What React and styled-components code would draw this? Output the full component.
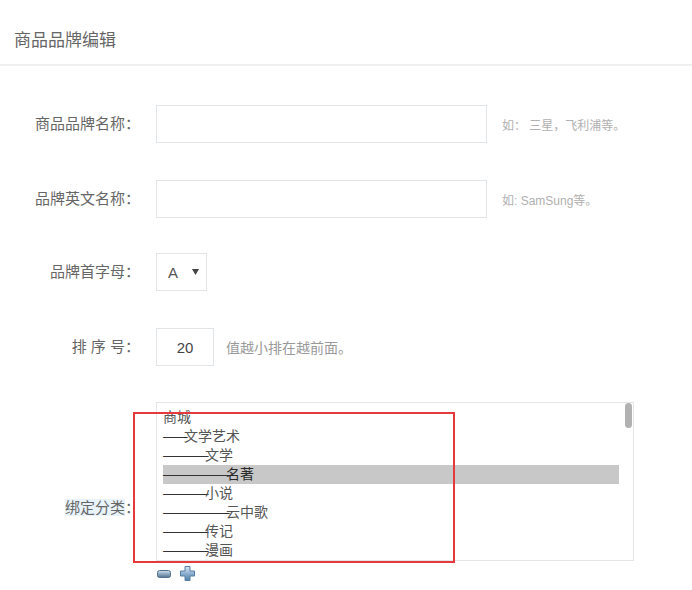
import React from 'react';
import styled, { createGlobalStyle } from 'styled-components';

const GlobalStyle = createGlobalStyle`
  html, body { margin: 0; padding: 0; background: #fff; }
  body { font-family: "Liberation Sans", "Noto Sans CJK SC", sans-serif; color: #666; }
  * { box-sizing: border-box; }
`;

const Page = styled.div`
  width: 692px;
  height: 590px;
  overflow: hidden;
`;

const Header = styled.header`
  height: 66px;
  padding: 12px 0 0 14px;
  display: flex;
  align-items: center;
  border-bottom: 2px solid #efefef;
  font-size: 17px;
  color: #666;
`;

const Form = styled.div`
  display: flex;
  flex-direction: column;
  padding-top: 39px;
`;

const Row = styled.div`
  position: relative;
  display: grid;
  grid-template-columns: 140px auto;
  column-gap: 16px;
  align-items: ${(p) => (p.$top ? 'start' : 'center')};
  margin-top: ${(p) => p.$mt || 0}px;
`;

const Label = styled.div`
  text-align: right;
  font-size: 15px;
  line-height: 20px;
  color: #666;
  white-space: pre;
  padding-top: ${(p) => p.$pt || 0}px;
`;

const Marked = styled.span`
  background: #e9f3fb;
`;

const Control = styled.div`
  display: flex;
  align-items: center;
`;

const TextInput = styled.input`
  width: ${(p) => p.$w}px;
  height: 38px;
  border: 1px solid #e1e5e8;
  border-radius: 0;
  outline: none;
  padding: 0 10px;
  font: 15px "Liberation Sans", "Noto Sans CJK SC", sans-serif;
  color: #444;
  text-align: ${(p) => p.$align || 'left'};
  background: #fff;
`;

const Hint = styled.span`
  margin-left: ${(p) => p.$ml || 15}px;
  font-size: ${(p) => p.$size || 12}px;
  color: ${(p) => p.$color || '#b0b0b0'};
  white-space: pre;
`;

const SelectBox = styled.div`
  width: 51px;
  height: 38px;
  border: 1px solid #e1e5e8;
  display: flex;
  align-items: center;
  justify-content: space-between;
  padding: 0 7px 0 11px;
  font-size: 15px;
  color: #555;
`;

const ListArea = styled.div`
  display: flex;
  flex-direction: column;
`;

const ListBox = styled.div`
  position: relative;
  width: 478px;
  height: 159px;
  border: 1px solid #e3e6e8;
  padding: 5px 14px 0 6px;
  overflow: hidden;
`;

const ScrollThumb = styled.div`
  position: absolute;
  right: 1px;
  top: 0;
  width: 7px;
  height: 25px;
  border-radius: 4px;
  background: #b2b2b2;
`;

const Option = styled.div`
  height: 19px;
  line-height: 19px;
  font-size: 14px;
  white-space: nowrap;
  color: ${(p) => (p.$selected ? '#2a2a2a' : '#555')};
  background: ${(p) => (p.$selected ? '#c8c8c8' : 'transparent')};
`;

const Dash = styled.span`
  font-family: "Liberation Sans", sans-serif;
  letter-spacing: -3.5px;
  color: #333;
`;

const Tools = styled.div`
  display: flex;
  align-items: center;
  gap: 9px;
  margin-top: 5px;
  padding-left: 1px;
  height: 15px;
`;

const Annotation = styled.div`
  position: absolute;
  left: 133px;
  top: 10px;
  width: 322px;
  height: 151px;
  border: 2px solid #e5393b;
  pointer-events: none;
`;

const MinusIcon = () => (
  <svg width="14" height="8" viewBox="0 0 14 8">
    <defs>
      <linearGradient id="gm" x1="0" y1="0" x2="0" y2="1">
        <stop offset="0" stopColor="#d3dfea" />
        <stop offset="0.5" stopColor="#8ea8c1" />
        <stop offset="1" stopColor="#546f8c" />
      </linearGradient>
    </defs>
    <rect x="0.5" y="0.5" width="13" height="7" rx="2" fill="url(#gm)" stroke="#52708f" />
  </svg>
);

const PlusIcon = () => (
  <svg width="15" height="15" viewBox="0 0 15 15">
    <defs>
      <linearGradient id="gp" x1="0" y1="0" x2="0" y2="1">
        <stop offset="0" stopColor="#d9e7f3" />
        <stop offset="0.5" stopColor="#8fb0d0" />
        <stop offset="1" stopColor="#4f7ea9" />
      </linearGradient>
    </defs>
    <path
      d="M5 0.5 H10 V5 H14.5 V10 H10 V14.5 H5 V10 H0.5 V5 H5 Z"
      fill="url(#gp)"
      stroke="#557ea5"
      strokeLinejoin="round"
    />
  </svg>
);

const Caret = () => (
  <svg width="7" height="6" viewBox="0 0 7 6">
    <path d="M0 0 H7 L3.5 6 Z" fill="#444" />
  </svg>
);

const categories = [
  [0, '商城'], [1, '文学艺术'], [2, '文学'], [3, '名著'],
  [2, '小说'], [3, '云中歌'], [2, '传记'], [2, '漫画'],
];

export default function App() {
  return (
    <Page>
      <GlobalStyle />
      <Header>商品品牌编辑</Header>
      <Form>
        <Row>
          <Label>商品品牌名称：</Label>
          <Control>
            <TextInput $w={331} />
            <Hint>如： 三星，飞利浦等。</Hint>
          </Control>
        </Row>
        <Row $mt={37}>
          <Label>品牌英文名称：</Label>
          <Control>
            <TextInput $w={331} />
            <Hint>如: SamSung等。</Hint>
          </Control>
        </Row>
        <Row $mt={35}>
          <Label>品牌首字母：</Label>
          <Control>
            <SelectBox>
              <span>A</span>
              <Caret />
            </SelectBox>
          </Control>
        </Row>
        <Row $mt={37}>
          <Label>{'排 序 号：'}</Label>
          <Control>
            <TextInput $w={58} $align="center" defaultValue="20" />
            <Hint $ml={12} $size={14} $color="#999">值越小排在越前面。</Hint>
          </Control>
        </Row>
        <Row $mt={36} $top>
          <Label $pt={96}>
            <Marked>绑定分类</Marked>：
          </Label>
          <ListArea>
            <ListBox>
              {categories.map(([lvl, name], i) => (
                <Option key={i} $selected={i === 3}>
                  {lvl > 0 && <Dash>{'——'.repeat(lvl)}</Dash>}
                  {name}
                </Option>
              ))}
              <ScrollThumb />
            </ListBox>
            <Tools>
              <MinusIcon />
              <PlusIcon />
            </Tools>
          </ListArea>
          <Annotation />
        </Row>
      </Form>
    </Page>
  );
}
